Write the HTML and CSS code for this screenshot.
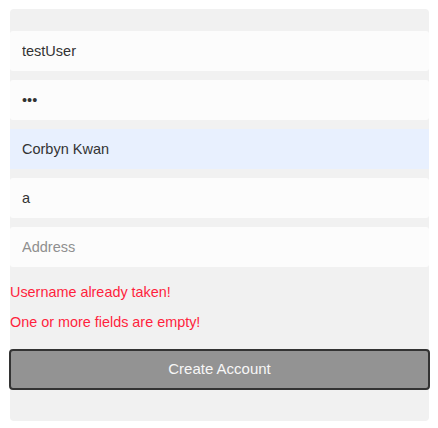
FILE: index.html
```html
<!DOCTYPE html>
<html>
<head>
<meta charset="utf-8">
<link rel="stylesheet" href="styles.css">
</head>
<body>
<form class="card">
  <div class="fields">
    <input class="field" type="text" value="testUser">
    <input class="field" type="password" value="abc">
    <input class="field autofill" type="text" value="Corbyn Kwan">
    <input class="field" type="text" value="a">
    <input class="field" type="text" placeholder="Address">
  </div>
  <p class="error first">Username already taken!</p>
  <p class="error">One or more fields are empty!</p>
  <button class="submit" type="button">Create Account</button>
</form>
</body>
</html>
```
FILE: styles.css
```css
html, body {
  margin: 0;
  padding: 0;
  background: #ffffff;
}
body {
  font-family: "Liberation Sans", Arial, sans-serif;
}
.card {
  box-sizing: border-box;
  width: 419px;
  margin: 9px 0 0 10px;
  padding: 22px 0 31px;
  background: #f1f1f1;
  border-radius: 4px;
  display: flex;
  flex-direction: column;
}
.fields {
  display: flex;
  flex-direction: column;
  gap: 9px;
}
.field {
  box-sizing: border-box;
  width: 100%;
  height: 40px;
  margin: 0;
  padding: 0 12px;
  border: none;
  border-radius: 3px;
  outline: none;
  background: #fcfcfc;
  color: #333333;
  font-family: "Liberation Sans", Arial, sans-serif;
  font-size: 14.5px;
}
.field::placeholder {
  color: #8f8f8f;
}
.field.autofill {
  background: #e8f0fe;
  border-radius: 0;
}
.error {
  margin: 0;
  color: #ff1f3d;
  font-size: 14.4px;
  line-height: 16px;
  margin-top: 14px;
}
.error.first {
  margin-top: 17px;
}
.submit {
  box-sizing: border-box;
  margin: 19px -1px 0;
  height: 41px;
  border: 2px solid #333333;
  border-radius: 4px;
  background: #939393;
  color: #f7f7f7;
  font-family: "Liberation Sans", Arial, sans-serif;
  font-size: 15px;
  padding: 0 0 2px;
}
```
